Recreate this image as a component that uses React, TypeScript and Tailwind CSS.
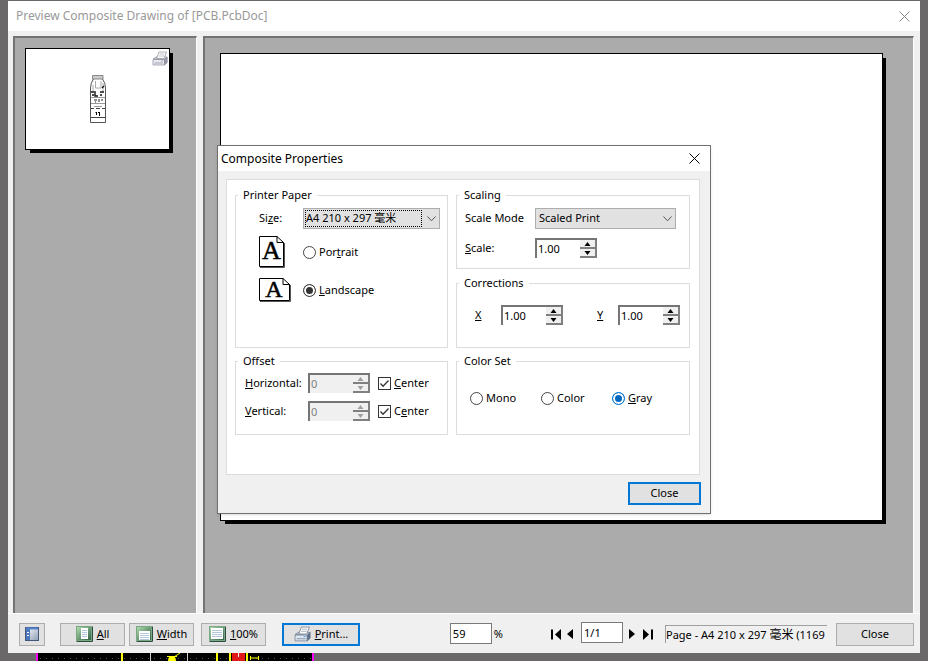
import { ReactNode, useState } from "react";

const chevron = (
  <svg className="pointer-events-none absolute right-1 top-1/2 -mt-[3px]" width="9" height="6" viewBox="0 0 9 6" fill="none" stroke="#555">
    <path d="M0.5 0.5 L4.5 4.8 L8.5 0.5" />
  </svg>
)

function Group({ title, className, children }: { title: string; className: string; children: ReactNode }) {
  return (
    <fieldset className={`min-w-0 border border-[#dcdcdc] ${className}`}>
      <legend className="ml-[2px] px-[5px] h-[14px] leading-[14px]">{title}</legend>
      {children}
    </fieldset>
  )
}

function Spinner({ id, value, disabled }: { id: string; value: string; disabled?: boolean }) {
  const [val, setVal] = useState<string>(value)
  const step = (by: number) => setVal((Number(val) + by).toFixed(2))
  const button = "flex-1 flex items-center justify-center border-r-2 border-b-2 border-[#808080] bg-[#f0f0f0]"
  const arrow = disabled ? "#a0a0a0" : "#000"

  return (
    <div className={`flex w-[62px] h-5 border-t-2 border-l-2 border-[#757575] ${disabled ? "bg-[#f0f0f0] text-[#808080]" : "bg-white"}`}>
      <input id={id} value={val} disabled={disabled} onChange={(e) => setVal(e.target.value)} className="min-w-0 flex-1 pl-px outline-none" />
      <div className="flex flex-col w-[17px]">
        <button type="button" aria-label="Up" disabled={disabled} onClick={() => step(0.01)} className={button}>
          <svg width="7" height="4" viewBox="0 0 7 4" fill={arrow}><path d="M3.5 0 L6.5 4 H0.5 Z" /></svg>
        </button>
        <button type="button" aria-label="Down" disabled={disabled} onClick={() => step(-0.01)} className={button}>
          <svg width="7" height="4" viewBox="0 0 7 4" fill={arrow}><path d="M3.5 4 L6.5 0 H0.5 Z" /></svg>
        </button>
      </div>
    </div>
  )
}

function Radio({ name, checked, onChange, blue, children }: { name: string; checked: boolean; onChange: () => void; blue?: boolean; children: ReactNode }) {
  const color = blue ? "border-[#0078d7] checked:bg-[#0067c0]" : "border-[#444] checked:bg-[#333]"
  return (
    <label className="flex items-center gap-[3px]">
      <input type="radio" name={name} checked={checked} onChange={onChange} className={`appearance-none size-[13px] rounded-full border bg-white ${color} checked:shadow-[inset_0_0_0_2px_#fff]`} />
      <span>{children}</span>
    </label>
  )
}

function CenterCheck({ children }: { children: ReactNode }) {
  return (
    <label className="relative flex items-center gap-[3px]">
      <input type="checkbox" defaultChecked className="peer appearance-none size-[13px] border border-[#333] bg-white" />
      <svg className="pointer-events-none absolute left-0 hidden peer-checked:block" width="13" height="13" viewBox="0 0 13 13" fill="none" stroke="#333" strokeWidth="1.3">
        <path d="M2.5 6.5 L5 9.2 L10.5 3.5" />
      </svg>
      <span>{children}</span>
    </label>
  )
}

function PaperIcon({ wide }: { wide?: boolean }) {
  const w = wide ? 31 : 25
  const h = wide ? 23 : 31
  return (
    <svg width={w + 1} height={h + 1} viewBox={`0 0 ${w + 1} ${h + 1}`} fill="none" stroke="#000">
      <path d={`M1 ${h + 0.5} H${w + 0.5} V7`} stroke="#555" />
      <path d={`M0.5 0.5 H${w - 7} L${w - 0.5} 6.5 V${h - 0.5} H0.5 Z`} fill="#fff" />
      <path d={`M${w - 7} 0.5 V6.5 H${w - 0.5}`} />
      <text x={wide ? 15 : 12.5} y={wide ? 19 : 23} textAnchor="middle" fontFamily="Liberation Serif, serif" fontSize={wide ? 24 : 26} fill="#000" strokeWidth="0.5">A</text>
    </svg>
  )
}

function PageIcon({ kind }: { kind: "all" | "width" | "full" }) {
  const page = { all: [5, 2, 7, 11], width: [3, 5, 11, 9], full: [2, 2, 12, 11] }[kind]
  return (
    <svg width="17" height="16" viewBox="0 0 17 16">
      <defs>
        <linearGradient id={kind} x1="0" x2="1" y1="0" y2="1">
          <stop offset="0" stopColor="#b4e0b0" />
          <stop offset="1" stopColor="#2a5a42" />
        </linearGradient>
      </defs>
      <rect x="0.5" y="0.5" width="15" height="14" fill={`url(#${kind})`} stroke="#7aa884" />
      <path d="M0.5 15.5 H16.5 V0.5" stroke="#2c4c40" fill="none" />
      <rect x={page[0]} y={page[1]} width={page[2]} height={page[3]} fill="#fff" />
      {[2, 4, 6, 8].map((y) => (
        <path key={y} d={`M${page[0] + 1} ${page[1] + y + 0.5} H${page[0] + page[2] - 1}`} stroke="#b4c8dc" />
      ))}
    </svg>
  )
}

function PrinterIcon({ size, light }: { size: number; light?: boolean }) {
  return (
    <svg width={size} height={size} viewBox="0 0 16 16" stroke={light ? "#8a8a98" : "#6c788c"} strokeWidth="0.7">
      <path d="M1 8 L4 6 H15 L13 9 Z" fill="#d4dae4" />
      <path d="M4.5 7.5 L7 1 H14.5 L12 7.5 Z" fill="#fff" />
      <path d="M7.5 3 H12.5 M6.5 5 H12" strokeWidth="0.5" />
      <path d="M1 8.5 H12.5 V14 H1 Z" fill={light ? "#e8e8f0" : "#dce8f4"} />
      <path d="M12.5 8.5 L15.2 6 V11.5 L12.5 14 Z" fill={light ? "#9898ac" : "#5c7088"} />
      <path d="M2.5 12 H11" />
      <path d="M9 10 H11" stroke={light ? "#8a8a98" : "#3888d8"} />
    </svg>
  )
}

// tiny preview of the board on the thumbnail page
function BoardPreview() {
  return (
    <svg width="16" height="48" viewBox="0 0 16 48" fill="none" stroke="#444">
      <path d="M2.5 0.5 H13 V4 H2.5 Z" fill="#ccc" stroke="#888" />
      <path d="M3.5 4 Q0.5 8 0.5 13 V47.5 H15.5 V13 Q15.5 8 12.5 4" stroke="#555" />
      <path d="M5.5 6 V13 H11 V6 M3 10 V16 M13 8 V16" stroke="#aaa" />
      <path d="M1 17 H4 M5 16 V21 H8 M10 17 H14 M2 20 H4 M10 20 H12 M12 13 L14 11" stroke="#111" strokeWidth="1.4" />
      <path d="M1 22.5 H15 M1 28.5 H15 M4 31.5 H12" stroke="#999" />
      <path d="M4 25 H7 M9 24 V27 M11 25 H13 M5 27 H6" stroke="#222" />
      <path d="M1 33.5 H4 M6 33.5 H10 M12 33.5 H15 M1 42.5 H15" />
      <path d="M6.5 37 V40 M9.5 37 V41 M5.5 37.5 H7 M8 37.5 H10" stroke="#000" />
    </svg>
  )
}

const tool = "flex items-center justify-center h-[23px] border border-[#adadad] bg-[#e1e1e1]"

export default function App() {

  const [orientation, setOrientation] = useState<string>('landscape')
  const [colorSet, setColorSet] = useState<string>('gray')
  const [zoom, setZoom] = useState<string>('59')
  const [page, setPage] = useState<string>('1/1')

  return (
    <div className="flex flex-col min-h-screen bg-[#6b6869] px-2 pt-px text-[11px] text-black font-['Noto_Sans','Noto_Sans_CJK_SC',sans-serif]">
      <div className="flex flex-1 flex-col bg-[#f0f0f0]">
        <header className="flex items-center justify-between h-[30px] bg-white pl-2 pr-[10px] text-[#999]">
          <h1 className="text-[12px]">Preview Composite Drawing of [PCB.PcbDoc]</h1>
          <button type="button" aria-label="Close window">
            <svg width="11" height="11" viewBox="0 0 11 11" stroke="#888"><path d="M0.5 0.5 L10.5 10.5 M10.5 0.5 L0.5 10.5" /></svg>
          </button>
        </header>

        <main className="flex flex-1 gap-[6px] pt-[5px] pl-[5px] pr-[6px]">
          <aside className="w-[184px] border-t-2 border-l-2 border-[#737373] border-r border-r-white bg-[#ababab] pt-[10px] pl-[10px]">
            <div className="relative flex justify-center items-center w-[145px] h-[102px] border border-black bg-white shadow-[4px_4px_0_-1px_#000]">
              <BoardPreview />
              <div className="absolute top-[2px] right-px"><PrinterIcon size={16} light /></div>
            </div>
          </aside>
          <section className="flex flex-1 border-t-2 border-l-2 border-[#737373] border-r border-r-white bg-[#ababab] pt-[15px] pl-[15px] pr-[30px] pb-[92px]">
            <div className="flex-1 border border-black bg-white shadow-[4px_4px_0_-1px_#000]" />
          </section>
        </main>

        <footer className="flex items-center h-10 border-t border-white pl-[11px] pr-[6px] pb-[2px] pt-[3px]">
          <button type="button" aria-label="Toggle pages" className={`${tool} w-[26px]`}>
            <svg width="14" height="14" viewBox="0 0 14 14">
              <defs>
                <linearGradient id="pane" x1="0" x2="1" y1="0" y2="1">
                  <stop offset="0" stopColor="#fff" />
                  <stop offset="1" stopColor="#8c9cb4" />
                </linearGradient>
              </defs>
              <rect x="0.5" y="0.5" width="13" height="13" fill="url(#pane)" stroke="#44587c" />
              <path d="M1 1.5 H13" stroke="#5484d0" strokeWidth="2" />
              <rect x="1" y="2" width="4" height="11" fill="#4c78c0" />
              <path d="M2 5.5 H4 M2 8.5 H4" stroke="#fff" />
            </svg>
          </button>
          <button type="button" className={`${tool} ml-[15px] w-[65px] gap-1`}><PageIcon kind="all" /><span><u>A</u>ll</span></button>
          <button type="button" className={`${tool} ml-1 w-[65px] gap-1`}><PageIcon kind="width" /><span><u>W</u>idth</span></button>
          <button type="button" className={`${tool} ml-[7px] w-[65px] gap-1`}><PageIcon kind="full" /><span><u>1</u>00%</span></button>
          <button type="button" className="flex items-center justify-center gap-1 ml-4 w-[78px] h-[23px] border-2 border-[#0078d7] bg-[#e1e1e1]">
            <PrinterIcon size={17} /><span><u>P</u>rint...</span>
          </button>

          <label className="flex items-center gap-[2px] ml-auto mr-12">
            <input aria-label="Zoom" value={zoom} onChange={(e) => setZoom(e.target.value)} className="w-[42px] h-[21px] mb-[2px] border border-[#7a7a7a] bg-white pl-[2px] outline-none" />
            <span>%</span>
          </label>

          <nav className="flex items-center">
            <button type="button" aria-label="First page">
              <svg width="10" height="11" viewBox="0 0 10 11"><path d="M0 0.5 H2 V10.5 H0 Z M10 0 V11 L4 5.5 Z" /></svg>
            </button>
            <button type="button" aria-label="Previous page" className="ml-[6px]">
              <svg width="6" height="10" viewBox="0 0 6 10"><path d="M6 0 V10 L0 5 Z" /></svg>
            </button>
            <input aria-label="Page" value={page} onChange={(e) => setPage(e.target.value)} className="ml-2 mr-[6px] w-[42px] h-[21px] mb-1 border border-[#7a7a7a] bg-white pl-[2px] outline-none" />
            <button type="button" aria-label="Next page">
              <svg width="6" height="10" viewBox="0 0 6 10"><path d="M0 0 V10 L6 5 Z" /></svg>
            </button>
            <button type="button" aria-label="Last page" className="ml-2">
              <svg width="10" height="11" viewBox="0 0 10 11"><path d="M8 0.5 H10 V10.5 H8 Z M0 0 V11 L6 5.5 Z" /></svg>
            </button>
          </nav>

          <p className="ml-3 w-[162px] h-[18px] overflow-hidden whitespace-nowrap border-t border-l border-[#a0a0a0] leading-[17px]">Page - A4 210 x 297 <span className="text-[12px]">毫米</span> (1169</p>
          <button type="button" className={`${tool} ml-[9px] w-[78px]`}>Close</button>
        </footer>
      </div>

      {/* board editor showing behind the window */}
      <svg className="ml-7" width="278" height="8" viewBox="0 0 278 8">
        <rect width="278" height="8" fill="#000" />
        <path d="M4 5.5 H276" stroke="#555" strokeDasharray="1 5" />
        <path d="M1 0 V8 M277 0 V8" stroke="#f0f" strokeWidth="2" />
        <path d="M86 0 V8 M181 0 V8 M194 0 V8 M211 0 V8" stroke="#ff0" strokeWidth="2" />
        <path d="M114.5 0 V8 M151.5 0 V8" stroke="#ccc" />
        <rect x="196" width="13" height="8" fill="#e01818" />
        <path d="M202.5 0 V4" stroke="#fff" />
        <path d="M132 8 Q132 3 136 3 Q140 3 140 8 Z" fill="#ff0" />
        <path d="M131 3.5 H141 M138 4 L144 0 M214 5 H222 M214.5 3 V7 M222.5 3 V7" stroke="#ff0" />
      </svg>

      <div role="dialog" aria-labelledby="dialog-title" className="absolute inset-x-0 top-[145px] mx-auto w-[494px] border border-[#707070] bg-[#f0f0f0] shadow-sm">
        <div className="flex items-center justify-between h-[25px] bg-white pl-[3px] pr-[10px]">
          <h2 id="dialog-title" className="text-[12px]">Composite Properties</h2>
          <button type="button" aria-label="Close dialog">
            <svg width="11" height="11" viewBox="0 0 11 11" stroke="#000"><path d="M0.5 0.5 L10.5 10.5 M10.5 0.5 L0.5 10.5" /></svg>
          </button>
        </div>

        <div className="flex gap-2 ml-2 mr-[10px] mt-2 h-[296px] border border-[#dcdcdc] bg-white pt-2 pl-2 pr-[9px]">
          <div className="flex flex-col gap-[6px] w-[213px]">
            <Group title="Printer Paper" className="h-[160px]">
              <div className="grid grid-cols-[44px_1fr] items-center pl-[23px] pr-[7px] pt-[6px]">
                <label htmlFor="size">Si<u>z</u>e:</label>
                <div className="relative">
                  <select id="size" className="block w-full h-[21px] appearance-none border border-[#adadad] bg-[#e1e1e1] pl-[2px] outline-none">
                    <option>A4 210 x 297 毫米</option>
                  </select>
                  <span className="pointer-events-none absolute left-[2px] top-[2px] bottom-[2px] right-[18px] border border-dotted border-black" />
                  {chevron}
                </div>
                <div className="mt-[7px]"><PaperIcon /></div>
                <div className="mt-2">
                  <Radio name="orientation" checked={orientation === 'portrait'} onChange={() => setOrientation('portrait')}>Por<u>t</u>rait</Radio>
                </div>
                <div className="mt-[10px]"><PaperIcon wide /></div>
                <div className="mt-[10px]">
                  <Radio name="orientation" checked={orientation === 'landscape'} onChange={() => setOrientation('landscape')}><u>L</u>andscape</Radio>
                </div>
              </div>
            </Group>
            <Group title="Offset" className="h-[81px]">
              <div className="grid grid-cols-[63px_70px_1fr] items-center gap-y-2 pl-[9px] pt-[5px]">
                <label htmlFor="horizontal"><u>H</u>orizontal:</label>
                <Spinner id="horizontal" value="0" disabled />
                <CenterCheck><u>C</u>enter</CenterCheck>
                <label htmlFor="vertical"><u>V</u>ertical:</label>
                <Spinner id="vertical" value="0" disabled />
                <CenterCheck>C<u>e</u>nter</CenterCheck>
              </div>
            </Group>
          </div>

          <div className="flex flex-1 flex-col">
            <Group title="Scaling" className="h-[81px]">
              <div className="grid grid-cols-[70px_141px] items-center gap-y-[9px] pl-2 pt-[6px]">
                <label htmlFor="scale-mode">Scale Mode</label>
                <div className="relative">
                  <select id="scale-mode" className="block w-full h-[21px] appearance-none border border-[#adadad] bg-[#e1e1e1] pl-[3px] outline-none">
                    <option>Scaled Print</option>
                  </select>
                  {chevron}
                </div>
                <label htmlFor="scale"><u>S</u>cale:</label>
                <Spinner id="scale" value="1.00" />
              </div>
            </Group>
            <Group title="Corrections" className="mt-[7px] h-[72px]">
              <div className="flex items-center pl-[18px] pt-[15px]">
                <label htmlFor="correction-x" className="w-[26px]"><u>X</u></label>
                <Spinner id="correction-x" value="1.00" />
                <label htmlFor="correction-y" className="ml-[34px] w-[21px]"><u>Y</u></label>
                <Spinner id="correction-y" value="1.00" />
              </div>
            </Group>
            <Group title="Color Set" className="mt-[6px] h-[81px]">
              <div className="grid grid-cols-[71px_71px_1fr] pl-[13px] pt-[22px]">
                <Radio name="color" checked={colorSet === 'mono'} onChange={() => setColorSet('mono')}>Mono</Radio>
                <Radio name="color" checked={colorSet === 'color'} onChange={() => setColorSet('color')}>Color</Radio>
                <Radio name="color" blue checked={colorSet === 'gray'} onChange={() => setColorSet('gray')}><u>G</u>ray</Radio>
              </div>
            </Group>
          </div>
        </div>

        <div className="flex justify-end pt-[7px] pb-2 pr-[9px]">
          <button type="button" className="w-[73px] h-[23px] border-2 border-[#0078d7] bg-[#e1e1e1]">Close</button>
        </div>
      </div>
    </div>
  );
}
